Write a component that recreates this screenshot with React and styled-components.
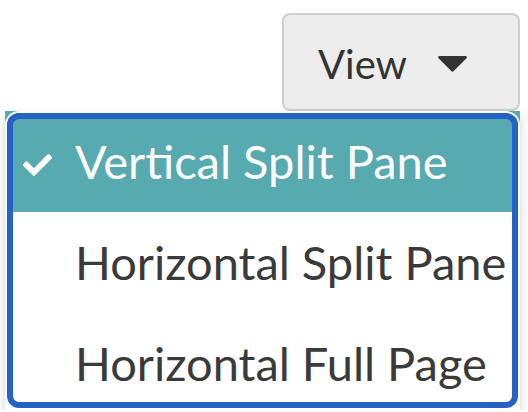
import styled, { createGlobalStyle } from "styled-components";

const GlobalStyle = createGlobalStyle`
body {
  margin: 0;
  background: #fff;
  font-family: Lato, "Open Sans", sans-serif;
  color: #333;
}
`;

const StyledPage = styled.div`
display: flex;
flex-direction: column;
align-items: flex-end;
padding: 13px 8px 0 5px;
`;

const StyledButton = styled.button`
box-sizing: border-box;
width: 238px;
height: 98px;
display: flex;
align-items: center;
gap: 31px;
padding: 3px 0 0 34px;
background: #ededed;
border: 2px solid #cfcfcf;
border-radius: 8px;
font-family: Lato, sans-serif;
font-size: 40px;
color: #333;
`;

const StyledCaret = styled.svg`
width: 29px;
height: 16px;
margin-top: 1px;
fill: #333;
`;

const StyledMenu = styled.ul`
position: relative;
align-self: stretch;
height: 299px;
margin: 0;
padding: 0;
list-style: none;
background: #fff;
overflow: hidden;
box-shadow: 0 6px 10px rgba(0, 0, 0, 0.18);

&::after {
  content: "";
  position: absolute;
  inset: 2px;
  border: 6px solid #2463c5;
  border-radius: 12px;
  box-shadow: 0 0 0 2px #fff;
  pointer-events: none;
}
`;

const StyledItem = styled.li`
box-sizing: border-box;
height: 101px;
display: flex;
align-items: center;
padding-left: 18px;
font-size: 47px;
line-height: 101px;
background: ${(p) => (p.$active ? "#57aaaf" : "#fff")};
color: ${(p) => (p.$active ? "#fff" : "#3a3a3a")};
`;

const StyledCheckSlot = styled.span`
width: 52px;
display: flex;
align-items: center;
padding-top: 7px;
`;

const StyledCheck = styled.svg`
width: 29px;
height: 22px;
fill: #fff;
`;

const items = ["Vertical Split Pane", "Horizontal Split Pane", "Horizontal Full Page"];

function App() {
  return (
    <StyledPage>
      <GlobalStyle />
      <StyledButton>
        <span>View</span>
        <StyledCaret viewBox="0 0 29 16">
          <path d="M1.5 0h26c1.2 0 1.8 1.4 1 2.3L15.5 15.3c-.6.6-1.5.6-2 0L.5 2.3C-.3 1.4.3 0 1.5 0z" />
        </StyledCaret>
      </StyledButton>
      <StyledMenu>
        {items.map((label, i) => (
          <StyledItem key={label} $active={i === 0}>
            <StyledCheckSlot>
              {i === 0 && (
                <StyledCheck viewBox="0 64 512 384">
                  <path d="M173.898 439.404l-166.4-166.4c-9.997-9.997-9.997-26.206 0-36.204l36.203-36.204c9.997-9.998 26.207-9.998 36.204 0L192 312.69 432.095 72.596c9.997-9.997 26.207-9.997 36.204 0l36.203 36.204c9.997 9.997 9.997 26.206 0 36.204l-294.4 294.401c-9.998 9.997-26.207 9.997-36.204-.001z" />
                </StyledCheck>
              )}
            </StyledCheckSlot>
            <span>{label}</span>
          </StyledItem>
        ))}
      </StyledMenu>
    </StyledPage>
  );
}

export default App;
